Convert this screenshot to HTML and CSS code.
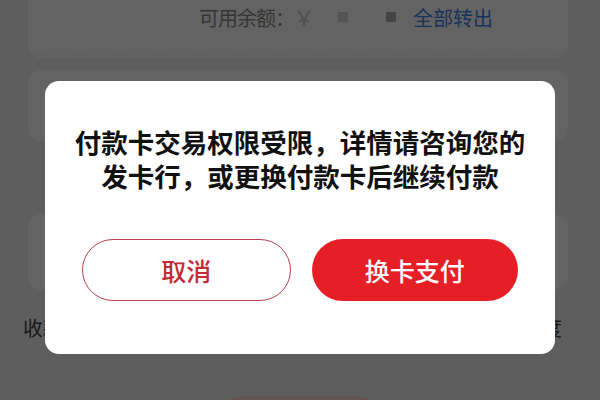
FILE: index.html
```html
<!DOCTYPE html>
<html lang="zh-CN">
<head>
<meta charset="utf-8">
<link rel="stylesheet" href="styles.css">
</head>
<body>
<div class="page">
  <div class="card card-top">
    <div class="balance">
      <span class="label">可用余额：</span>
      <span class="yen">￥</span>
      <span class="mask mask-light"></span>
      <span class="mask mask-dark"></span>
      <a class="link">全部转出</a>
    </div>
    <div class="sep"></div>
  </div>
  <div class="card card-mid"></div>
  <div class="card card-low"></div>
  <div class="row-labels">
    <span class="lbl">收款方</span>
    <span class="lbl">额度</span>
  </div>
  <div class="bottom-btn"></div>
</div>

<div class="overlay">
  <div class="modal">
    <p class="msg">付款卡交易权限受限，详情请咨询您的<br>发卡行，或更换付款卡后继续付款</p>
    <div class="actions">
      <button class="btn btn-cancel">取消</button>
      <button class="btn btn-ok">换卡支付</button>
    </div>
  </div>
</div>
</body>
</html>
```

FILE: styles.css
```css
* { box-sizing: border-box; }
html, body {
  margin: 0;
  padding: 0;
  width: 600px;
  height: 400px;
  overflow: hidden;
  font-family: "Noto Sans CJK SC", "Noto Sans", sans-serif;
}
body { background: #f2f2f2; position: relative; }

.page {
  display: flex;
  flex-direction: column;
  padding: 0 32px 0 28px;
  gap: 12px;
  height: 400px;
  overflow: hidden;
}
.card {
  background: #ffffff;
  border-radius: 0 0 14px 14px;
  flex: none;
}
.card-top {
  height: 58px;
  display: flex;
  flex-direction: column;
  justify-content: space-between;
  padding-top: 3px;
}
.balance {
  display: flex;
  align-items: center;
  padding-left: 171px;
  height: 28px;
  font-size: 20px;
  color: #8a8a8a;
  white-space: nowrap;
}
.label { letter-spacing: -1px; }
.yen { color: #c8c8c8; margin-left: 0; }
.mask {
  display: inline-block;
  width: 10px;
  height: 10px;
  border-radius: 1px;
}
.mask-light { background: #d6d6d6; margin-left: 24px; }
.mask-dark { background: #b0b0b0; margin-left: 38px; }
.link { color: #3f86ea; margin-left: 17px; }
.sep {
  height: 2px;
  margin: 0 4px 2px;
  background: repeating-linear-gradient(90deg, #f6f6f6 0 6px, #ffffff 6px 10px);
}
.card-mid {
  height: 72px;
  border-radius: 14px;
}
.card-low {
  height: 76px;
  margin-top: 60px;
  border-radius: 14px;
}
.row-labels {
  display: flex;
  justify-content: space-between;
  flex: none;
  margin-top: 12px;
  margin-left: -5px;
  margin-right: 6px;
  font-size: 20px;
  line-height: 28px;
  color: #444;
  height: 28px;
}
.bottom-btn {
  flex: none;
  align-self: center;
  width: 156px;
  height: 40px;
  margin-top: 42px;
  margin-left: 4px;
  background: #ffd8d0;
  border-radius: 20px;
}

.overlay {
  position: absolute;
  inset: 0;
  background: rgba(0, 0, 0, 0.61);
  display: flex;
  flex-direction: column;
  align-items: center;
  padding-top: 81px;
}
.modal {
  width: 510px;
  height: 273px;
  background: #ffffff;
  border-radius: 14px;
  padding: 44px 37px 0;
  display: flex;
  flex-direction: column;
}
.msg {
  margin: 0 -20px;
  text-align: center;
  font-size: 26.5px;
  line-height: 34px;
  font-weight: 600;
  color: #111111;
  white-space: nowrap;
}
.actions {
  display: flex;
  gap: 21px;
  margin-top: 46px;
}
.btn {
  flex: 1;
  height: 62px;
  border-radius: 31px;
  font-family: inherit;
  font-size: 25px;
  font-weight: 500;
  cursor: pointer;
  padding: 0;
}
.btn-cancel {
  background: #ffffff;
  border: 1.5px solid #b8414b;
  color: #c42a35;
}
.btn-ok {
  background: #e61e26;
  border: none;
  color: #ffffff;
}
```
